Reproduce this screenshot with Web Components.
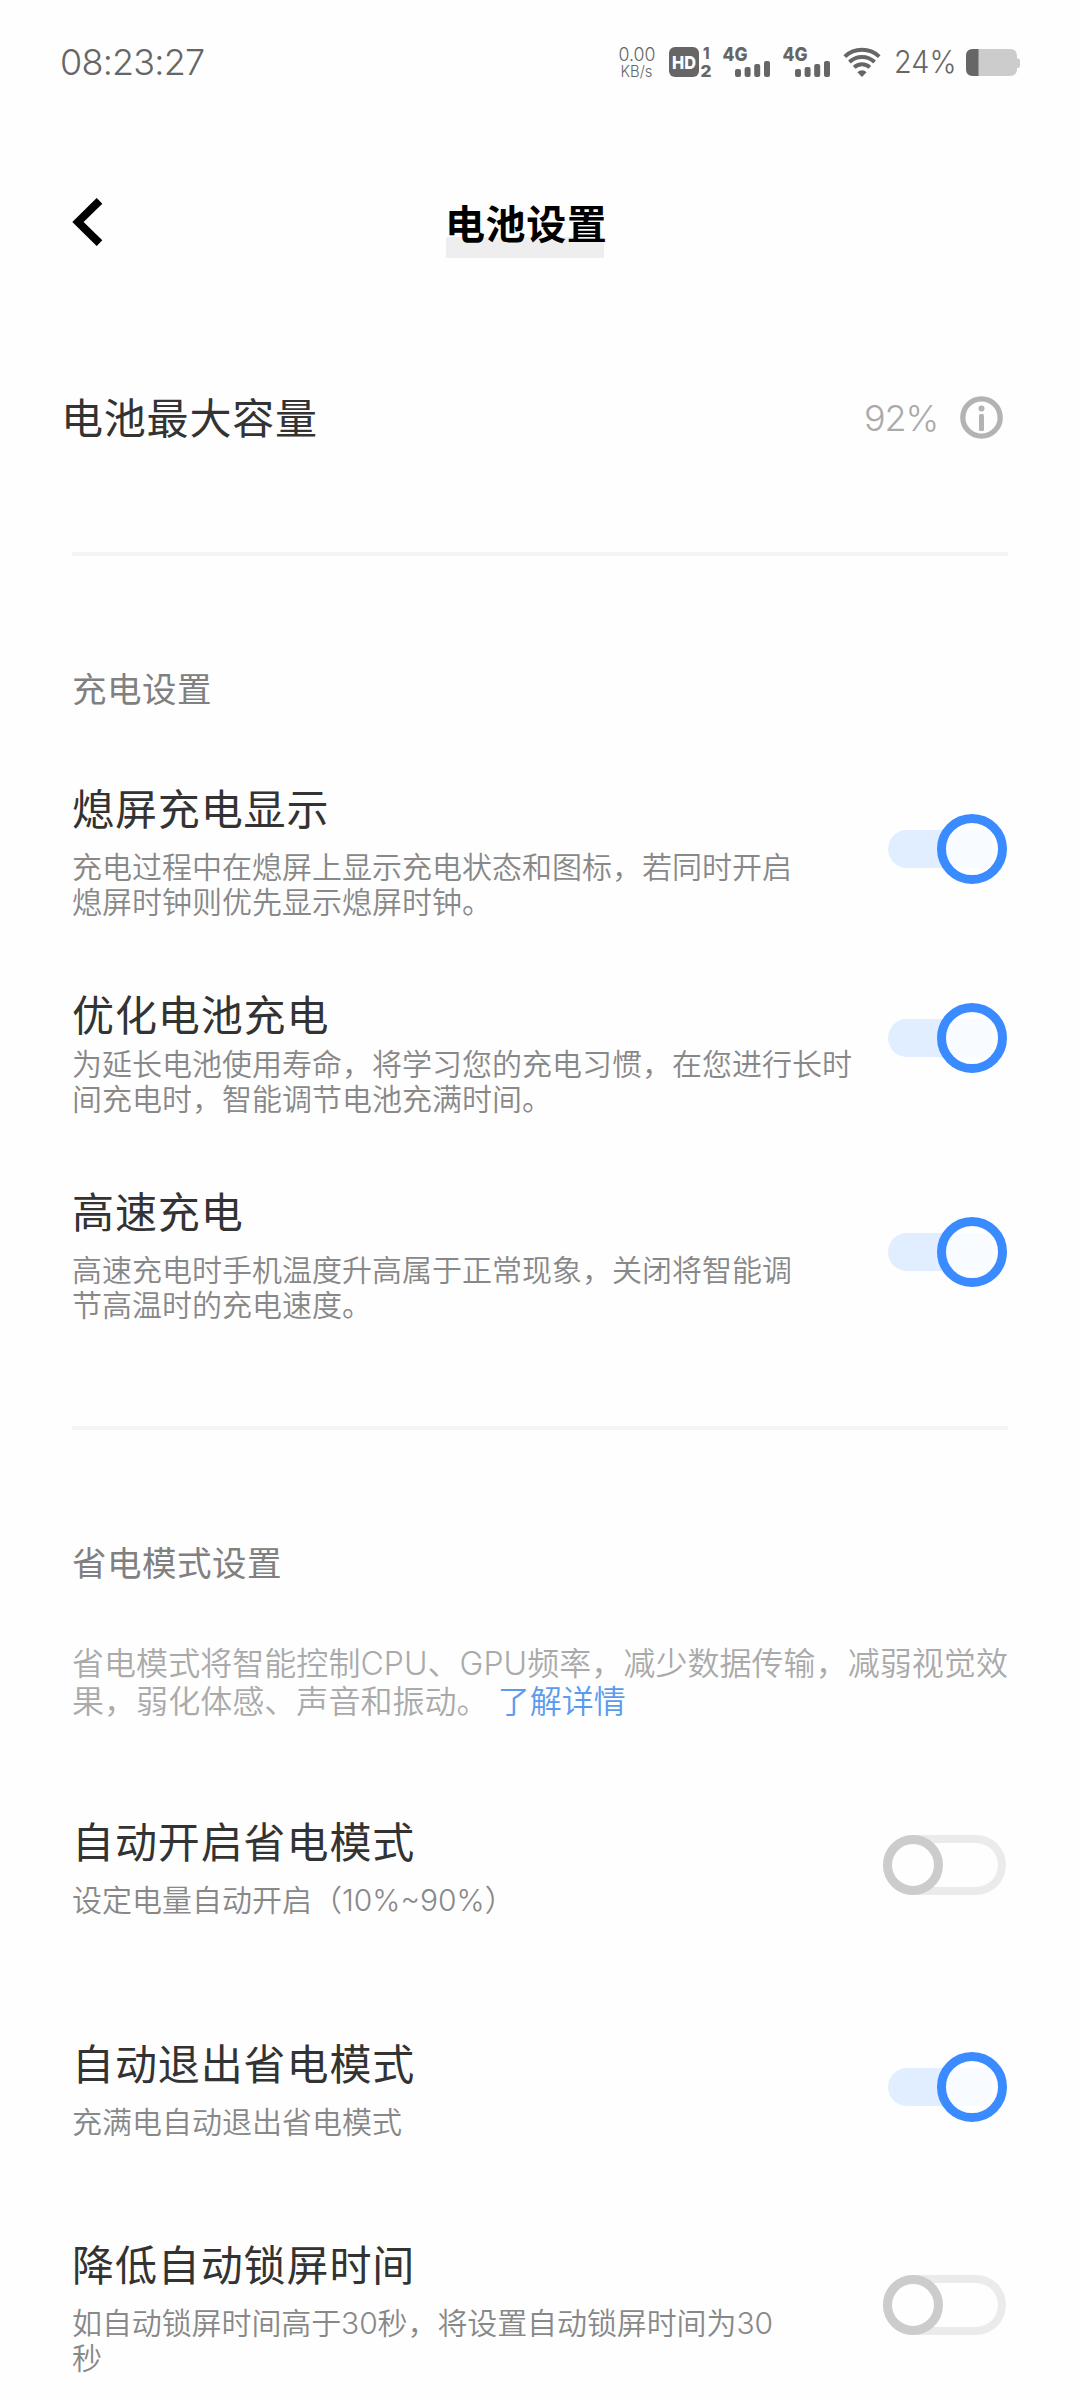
<!DOCTYPE html>
<html lang="zh-CN">
<head>
<meta charset="utf-8">
<title>电池设置</title>
<style>
  body{
    margin:0;
    background:#fefefe;
    font-family: Inter, "Noto Sans CJK SC", sans-serif;
    color:#333;
  }
</style>
</head>
<body>

<battery-page>
  <status-bar slot="status" time="08:23:27" battery="24%"></status-bar>
  <page-header slot="header">电池设置</page-header>

  <capacity-row value="92%">电池最大容量</capacity-row>

  <settings-group label="充电设置" style="--gap:66px; --label-gap:65px; --end:103px">
    <setting-row on>
      熄屏充电显示
      <span slot="desc">充电过程中在熄屏上显示充电状态和图标，若同时开启<br>熄屏时钟则优先显示熄屏时钟。</span>
    </setting-row>
    <setting-row on style="--desc-gap:1px; --switch-lift:25px">
      优化电池充电
      <span slot="desc">为延长电池使用寿命，将学习您的充电习惯，在您进行长时<br>间充电时，智能调节电池充满时间。</span>
    </setting-row>
    <setting-row on>
      高速充电
      <span slot="desc">高速充电时手机温度升高属于正常现象，关闭将智能调<br>节高温时的充电速度。</span>
    </setting-row>
  </settings-group>

  <settings-group label="省电模式设置" style="--gap:117px; --label-gap:56px; --end:0px">
    <group-note>省电模式将智能控制CPU、GPU频率，减少数据传输，减弱视觉效<br>果，弱化体感、声音和振动。 <a slot="link">了解详情</a></group-note>
    <setting-row style="margin-top:-25px">
      自动开启省电模式
      <span slot="desc">设定电量自动开启（10%~90%）</span>
    </setting-row>
    <setting-row on>
      自动退出省电模式
      <span slot="desc">充满电自动退出省电模式</span>
    </setting-row>
    <setting-row style="margin-top:-21px">
      降低自动锁屏时间
      <span slot="desc" style="letter-spacing:-0.1px">如自动锁屏时间高于30秒，将设置自动锁屏时间为30<br>秒</span>
    </setting-row>
  </settings-group>
</battery-page>

<script>
// clones the markup into an open shadow root
class BaseElement extends HTMLElement {
  constructor() {
    super();
    const template = document.createElement('template');
    template.innerHTML = this.constructor.markup;
    this.attachShadow({ mode: 'open' });
    this.shadowRoot.appendChild(template.content.cloneNode(true));
  }

  setText(selector, attr) {
    this.shadowRoot.querySelector(selector).textContent = this.getAttribute(attr);
  }
}

class BatteryPage extends BaseElement {
  static markup = `
  <style>
    :host{
      display:flex;
      flex-direction:column;
      width:1080px;
      height:2400px;
      overflow:hidden;
    }
    main{
      display:flex;
      flex-direction:column;
      padding:0 72px;
    }
  </style>
  <slot name="status"></slot>
  <slot name="header"></slot>
  <main><slot></slot></main>
`;
}

class StatusBar extends BaseElement {
  static markup = `
  <style>
    :host{
      display:flex;
      justify-content:space-between;
      align-items:center;
      box-sizing:border-box;
      height:124px;
      padding:0 60px;
      color:#666;
    }
    .time{
      font-size:36px;
      font-weight:350;
      line-height:44px;
      letter-spacing:-0.8px;
    }
    .icons{
      display:flex;
      align-items:center;
    }
    svg{
      display:block;
      overflow:visible;
    }
    text{
      font-family: Inter, sans-serif;
    }
    .speed{ margin-right:13px; }
    .hd{ margin-right:12px; }
    .signal{ margin-right:12px; }
    .wifi{ margin:0 16px 0 1px; }
    .pct{ margin-right:9px; }
  </style>
  <span class="time"></span>
  <div class="icons">
    <svg class="speed" width="38" height="32" viewBox="0 0 38 32" fill="#666">
      <text x="0.5" y="14.5" font-size="18.5" font-weight="350" textLength="37" lengthAdjust="spacingAndGlyphs">0.00</text>
      <text x="2.5" y="30.5" font-size="15.5" font-weight="350" textLength="32" lengthAdjust="spacingAndGlyphs">KB/s</text>
    </svg>
    <svg class="hd" width="42" height="32" viewBox="0 0 42 32" fill="#666">
      <rect x="0" y="1" width="30" height="30" rx="6"/>
      <text x="3" y="22.6" font-size="18" font-weight="800" fill="#fff" textLength="24" lengthAdjust="spacingAndGlyphs">HD</text>
      <text x="34" y="12.8" font-size="16" font-weight="800" textLength="6.5" lengthAdjust="spacingAndGlyphs">1</text>
      <text x="31.5" y="30.5" font-size="16" font-weight="800" textLength="11" lengthAdjust="spacingAndGlyphs">2</text>
    </svg>
    <svg class="signal" width="48" height="32" viewBox="0 0 48 32" fill="#666">
      <text x="-0.5" y="14.8" font-size="19" font-weight="800" textLength="25" lengthAdjust="spacingAndGlyphs">4G</text>
      <rect x="12" y="23" width="6" height="8" rx="2"/>
      <rect x="21.6" y="21" width="6" height="10" rx="2"/>
      <rect x="31.2" y="18" width="6" height="13" rx="2"/>
      <rect x="41" y="15" width="6" height="16" rx="2"/>
    </svg>
    <svg class="signal" width="48" height="32" viewBox="0 0 48 32" fill="#666">
      <text x="-0.5" y="14.8" font-size="19" font-weight="800" textLength="25" lengthAdjust="spacingAndGlyphs">4G</text>
      <rect x="12" y="23" width="6" height="8" rx="2"/>
      <rect x="21.6" y="21" width="6" height="10" rx="2"/>
      <rect x="31.2" y="18" width="6" height="13" rx="2"/>
      <rect x="41" y="15" width="6" height="16" rx="2"/>
    </svg>
    <svg class="wifi" width="36" height="32" viewBox="0 0 36 32" fill="none" stroke="#666" stroke-width="4">
      <path d="M0.8 10.6A25.3 25.3 0 0 1 35.2 10.6"/>
      <path d="M5.4 16A18.3 18.3 0 0 1 30.6 16"/>
      <path d="M10.2 21.4A11.2 11.2 0 0 1 25.8 21.4"/>
      <path d="M18 31L13.4 26.2A6.4 6.4 0 0 1 22.6 26.2Z" fill="#666" stroke="none"/>
    </svg>
    <svg class="pct" width="61" height="32" viewBox="0 0 61 32" fill="#666">
      <text class="battery" x="-2" y="27.2" font-size="30.5" font-weight="350" textLength="62.5" lengthAdjust="spacingAndGlyphs"></text>
    </svg>
    <svg width="54" height="32" viewBox="0 0 54 32">
      <path d="M7 3H44Q51 3 51 10V12.5H52Q54 12.5 54 14.5V19.5Q54 22 52 22H51V23Q51 30 44 30H7Q0 30 0 23V10Q0 3 7 3Z" fill="#ccc"/>
      <path d="M12.5 3H7Q0 3 0 10V23Q0 30 7 30H12.5Z" fill="#666"/>
    </svg>
  </div>
`;

  connectedCallback() {
    this.setText('.time', 'time');
    this.setText('.battery', 'battery');
  }
}

class PageHeader extends BaseElement {
  static markup = `
  <style>
    :host{
      display:grid;
      grid-template-columns:373px auto 1fr;
      align-items:center;
      height:196px;
      padding-left:72px;
      color:#000;
    }
    svg{
      display:block;
    }
    h1{
      margin:0;
      justify-self:start;
      width:163px;
      padding-top:5px;
      white-space:nowrap;
      font-size:40px;
      font-weight:700;
      line-height:68px;
      letter-spacing:0.6px;
      background:linear-gradient(#eee,#eee) 1px 51px / 158px 21px no-repeat;
    }
  </style>
  <svg width="32" height="48" viewBox="0 0 32 48" fill="none" stroke="#000" stroke-width="8">
    <path d="M27.5 2.8L6 24L27.5 45.2"/>
  </svg>
  <h1><slot></slot></h1>
`;
}

class CapacityRow extends BaseElement {
  static markup = `
  <style>
    :host{
      display:flex;
      align-items:center;
      justify-content:space-between;
      height:120px;
      margin:39px 5px 73px -11px;
      font-size:42px;
      line-height:60px;
      letter-spacing:0.8px;
    }
    .value{
      display:flex;
      align-items:center;
      gap:22px;
      margin-top:-3px;
      color:#aaa;
      font-size:36px;
      font-weight:350;
      letter-spacing:-1.2px;
    }
  </style>
  <slot></slot>
  <div class="value">
    <span></span>
    <svg width="43" height="43" viewBox="0 0 43 43" fill="#b3b3b3">
      <circle cx="21.5" cy="21.5" r="18.7" fill="none" stroke="#b3b3b3" stroke-width="5.3"/>
      <circle cx="21.5" cy="12.4" r="3"/>
      <rect x="19" y="18" width="5" height="17" rx="1.5"/>
    </svg>
  </div>
`;

  connectedCallback() {
    this.setText('span', 'value');
  }
}

class SettingsGroup extends BaseElement {
  static markup = `
  <style>
    :host{
      display:block;
      border-top:4px solid #f4f4f4;
      padding:109px 0 var(--end);
    }
    h2{
      margin:0 0 var(--label-gap);
      font-size:34.5px;
      font-weight:400;
      line-height:50px;
      letter-spacing:0.5px;
      color:#808080;
    }
    .rows{
      display:flex;
      flex-direction:column;
      gap:var(--gap);
    }
  </style>
  <h2></h2>
  <div class="rows"><slot></slot></div>
`;

  connectedCallback() {
    this.setText('h2', 'label');
  }
}

class GroupNote extends BaseElement {
  static markup = `
  <style>
    :host{
      display:block;
      white-space:nowrap;
      font-size:32px;
      font-weight:350;
      line-height:38px;
      letter-spacing:0.05px;
      color:#aaa;
    }
    ::slotted(a){
      color:#5a9bee;
    }
  </style>
  <slot></slot><slot name="link"></slot>
`;
}

class SettingRow extends BaseElement {
  static markup = `
  <style>
    :host{
      display:flex;
      justify-content:space-between;
      align-items:center;
    }
    .title{
      font-size:42px;
      line-height:60px;
      letter-spacing:0.9px;
    }
    .desc{
      margin-top:var(--desc-gap, 10px);
      white-space:nowrap;
      font-size:30px;
      font-weight:350;
      line-height:35px;
      color:#888;
    }
    toggle-switch{
      position:relative;
      top:-1px;
      margin-bottom:var(--switch-lift, 0);
    }
  </style>
  <div>
    <div class="title"><slot></slot></div>
    <div class="desc"><slot name="desc"></slot></div>
  </div>
  <toggle-switch></toggle-switch>
`;

  connectedCallback() {
    this.shadowRoot.querySelector('toggle-switch').toggleAttribute('on', this.hasAttribute('on'));
  }
}

class ToggleSwitch extends BaseElement {
  static markup = `
  <style>
    :host{
      display:flex;
      align-items:center;
      box-sizing:border-box;
      width:123px;
      height:60px;
      margin-right:2px;
      border-radius:30px;
      box-shadow:inset 0 0 0 8px #ebebeb;
    }
    .knob{
      box-sizing:border-box;
      width:60px;
      height:60px;
      border:9px solid #ccc;
      border-radius:50%;
      background:#fefefe;
    }
    :host([on]){
      justify-content:flex-end;
      width:119px;
      height:38px;
      margin-right:1px;
      box-shadow:none;
      background:linear-gradient(90deg, #e1eeff 104px, transparent 104px);
    }
    :host([on]) .knob{
      flex:none;
      width:70px;
      height:70px;
      border-color:#3a8bff;
      background:rgba(255,255,255,.75);
    }
  </style>
  <div class="knob"></div>
`;
}

window.customElements.define('toggle-switch', ToggleSwitch);
window.customElements.define('setting-row', SettingRow);
window.customElements.define('group-note', GroupNote);
window.customElements.define('settings-group', SettingsGroup);
window.customElements.define('capacity-row', CapacityRow);
window.customElements.define('page-header', PageHeader);
window.customElements.define('status-bar', StatusBar);
window.customElements.define('battery-page', BatteryPage);
</script>
</body>
</html>
